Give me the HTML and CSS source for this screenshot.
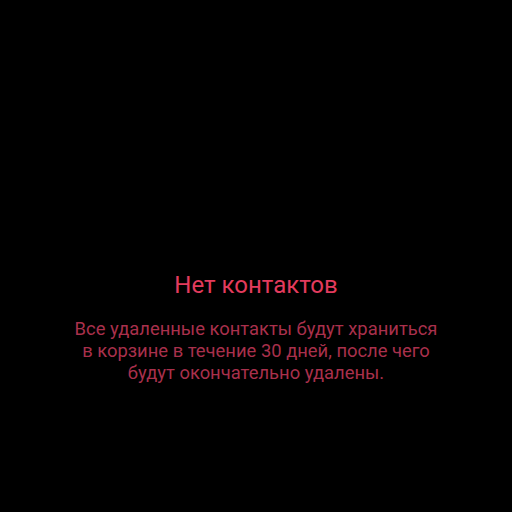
FILE: index.html
```html
<!DOCTYPE html>
<html lang="ru">
<head>
  <meta charset="UTF-8">
  <meta name="viewport" content="width=device-width, initial-scale=1">
  <title>Корзина</title>
  <link rel="stylesheet" href="styles.css">
</head>
<body>
  <!-- пустое состояние -->
  <div class="empty">
    <h1 class="empty-title">Нет контактов</h1>
    <p class="empty-text">Все удаленные контакты будут храниться<br>в корзине в течение 30 дней, после чего<br>будут окончательно удалены.</p>
  </div>
</body>
</html>
```

FILE: styles.css
```css
body {
  margin: 0;
  height: 100vh;
  background-color: #000;
  font-family: Roboto, "Noto Sans", sans-serif;
}

.empty {
  padding-top: 270px;
  text-align: center;
}

.empty-title {
  margin: 0;
  font-size: 24px;
  font-weight: 400;
  line-height: 30px;
  color: #e33b5d;
}

.empty-text {
  margin: 18px 0 0;
  font-size: 18.4px;
  line-height: 22px;
  color: #a9304c;
}
```
